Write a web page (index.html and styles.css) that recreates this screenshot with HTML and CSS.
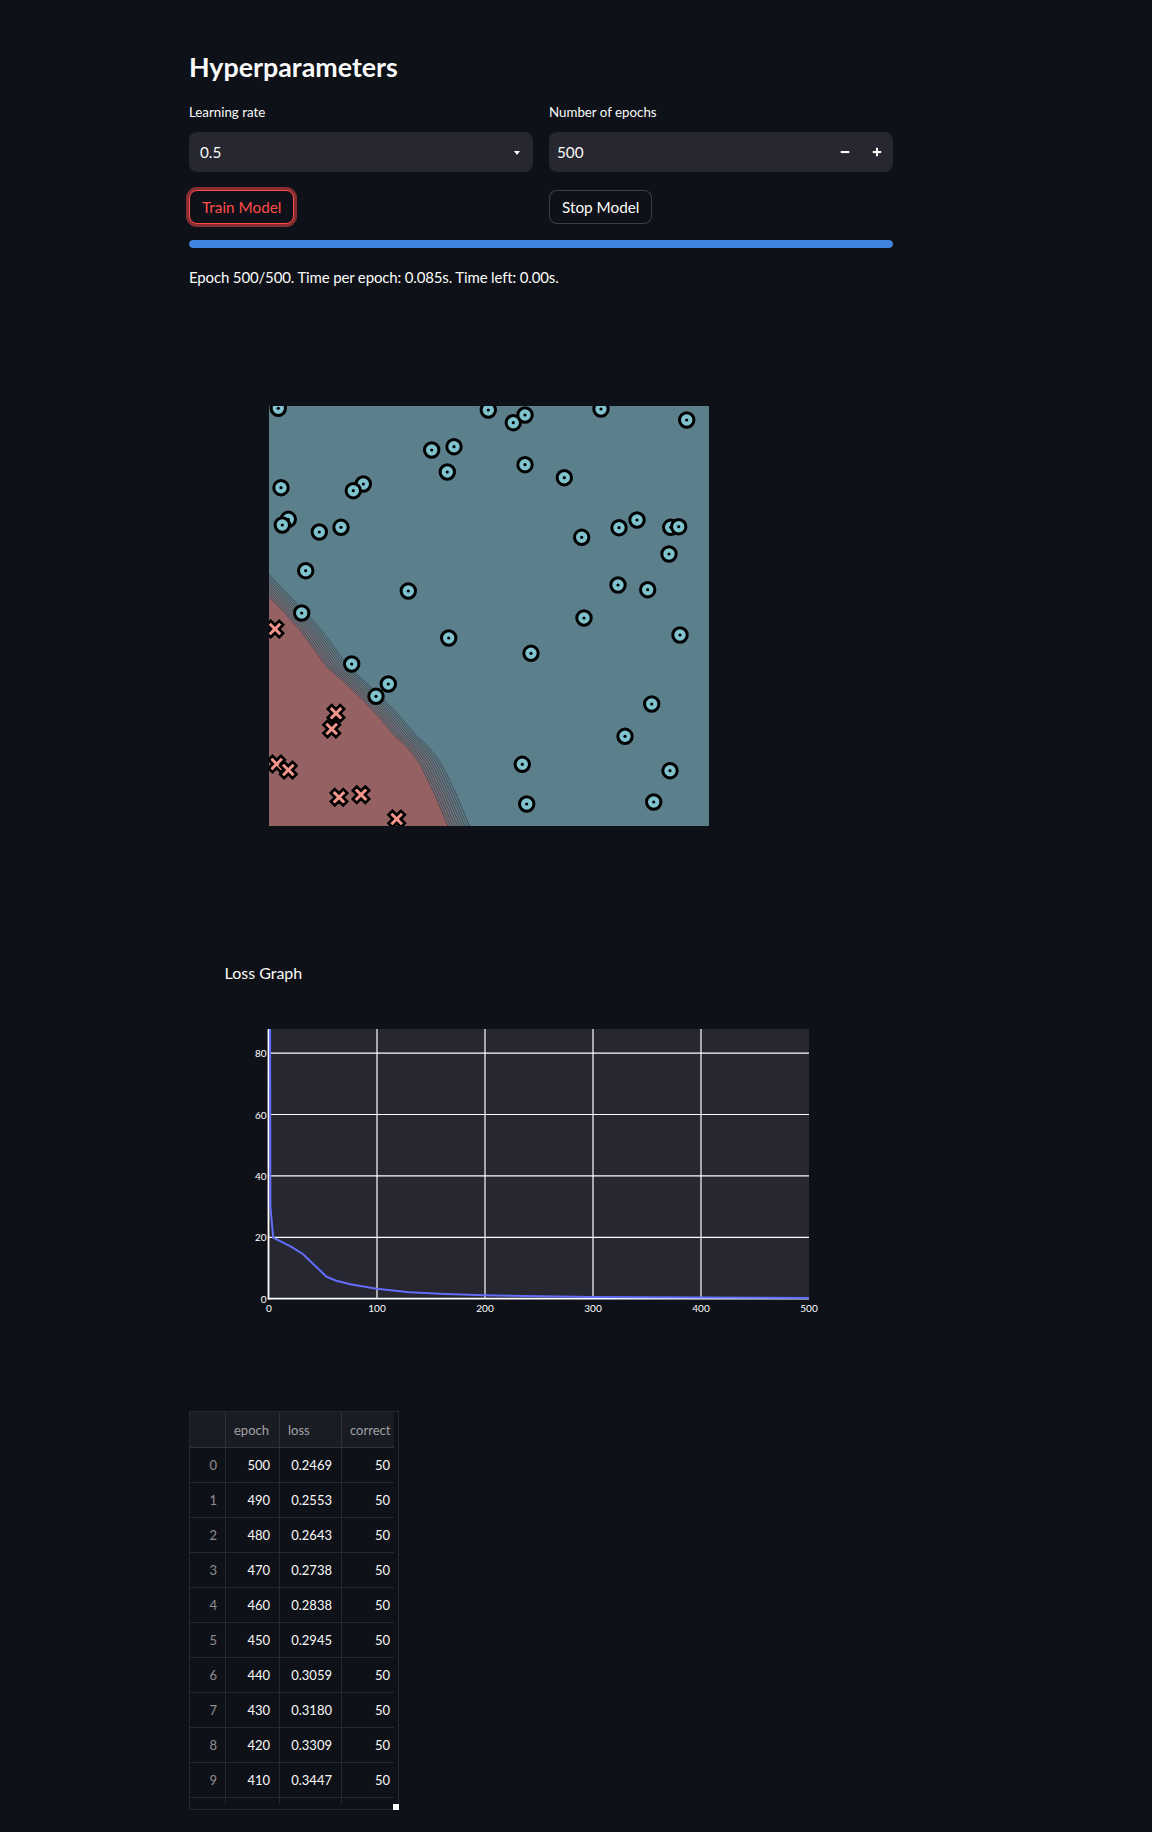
FILE: index.html
```html
<!DOCTYPE html>
<html lang="en">
<head>
<meta charset="utf-8">
<title>Hyperparameters</title>
<link rel="stylesheet" href="styles.css">
</head>
<body>
<div class="main">
  <h3 class="title">Hyperparameters</h3>

  <div class="cols">
    <div class="col">
      <label class="wlabel">Learning rate</label>
      <div class="select"><span class="val">0.5</span><span class="caret"></span></div>
    </div>
    <div class="col">
      <label class="wlabel">Number of epochs</label>
      <div class="numinput">
        <span class="numval">500</span>
        <span class="step"><svg width="10" height="10" viewBox="0 0 10 10"><rect x="0.7" y="4" width="8.6" height="2.1" fill="#fafafa"/></svg></span>
        <span class="step"><svg width="10" height="10" viewBox="0 0 10 10"><rect x="0.8" y="4" width="8.4" height="2.1" fill="#fafafa"/><rect x="3.95" y="0.8" width="2.1" height="8.4" fill="#fafafa"/></svg></span>
      </div>
    </div>
  </div>

  <div class="cols btnrow">
    <div class="col"><button class="btn btn-focus">Train Model</button></div>
    <div class="col"><button class="btn">Stop Model</button></div>
  </div>

  <div class="progress"><div class="progress-fill" style="width:100%"></div></div>

  <p class="status">Epoch 500/500. Time per epoch: 0.085s. Time left: 0.00s.</p>

  <div class="figure">
    <svg class="dplot" width="440" height="420" viewBox="0 0 440 420">
      <defs>
        <g id="m-o"><circle r="7.2" fill="#7fc3cf" stroke="#000" stroke-width="3"/><circle r="1.6" fill="#000"/></g>
        <path id="m-x" d="M-2.8,-8.8 L2.8,-8.8 L2.8,-2.8 L8.8,-2.8 L8.8,2.8 L2.8,2.8 L2.8,8.8 L-2.8,8.8 L-2.8,2.8 L-8.8,2.8 L-8.8,-2.8 L-2.8,-2.8 Z" transform="rotate(45)" fill="#f2958c" stroke="#000" stroke-width="2.6" stroke-linejoin="miter"/>
        <polygon id="redpoly" points="-30,160 0,191 14,205 31,224 44,242 58,261 75,276 91,291 110,311 124,328 139,342 151,358 166,389 179,420 190,445 -40,445 -40,160"/>
        <polyline id="edge" points="-30,160 0,191 14,205 31,224 44,242 58,261 75,276 91,291 110,311 124,328 139,342 151,358 166,389 179,420 190,445" fill="none"/>
      </defs>
      <rect width="440" height="420" fill="#5b7f8b"/>
      <g fill="#956163" fill-opacity="0.07">
        <use href="#redpoly" x="21.6"/>
        <use href="#redpoly" x="19.2"/>
        <use href="#redpoly" x="16.8"/>
        <use href="#redpoly" x="14.4"/>
        <use href="#redpoly" x="12"/>
        <use href="#redpoly" x="9.6"/>
        <use href="#redpoly" x="7.2"/>
        <use href="#redpoly" x="4.8"/>
        <use href="#redpoly" x="2.4"/>
      </g>
      <use href="#redpoly" fill="#956163"/>
      <g stroke="#343a44" stroke-opacity="0.8" stroke-width="0.8">
        <use href="#edge" x="0"/>
        <use href="#edge" x="2.4"/>
        <use href="#edge" x="4.8"/>
        <use href="#edge" x="7.2"/>
        <use href="#edge" x="9.6"/>
        <use href="#edge" x="12"/>
        <use href="#edge" x="14.4"/>
        <use href="#edge" x="16.8"/>
        <use href="#edge" x="19.2"/>
        <use href="#edge" x="21.6"/>
      </g>
      <g>
        <use href="#m-o" x="9.3" y="2.3"/>
        <use href="#m-o" x="219.3" y="4"/>
        <use href="#m-o" x="244.3" y="16.7"/>
        <use href="#m-o" x="256" y="9"/>
        <use href="#m-o" x="332" y="3"/>
        <use href="#m-o" x="417.7" y="14"/>
        <use href="#m-o" x="162.7" y="44"/>
        <use href="#m-o" x="185" y="40.7"/>
        <use href="#m-o" x="178.3" y="66"/>
        <use href="#m-o" x="256" y="58.7"/>
        <use href="#m-o" x="295.3" y="71.7"/>
        <use href="#m-o" x="12" y="81.7"/>
        <use href="#m-o" x="94.3" y="78"/>
        <use href="#m-o" x="84.3" y="84.7"/>
        <use href="#m-o" x="19.3" y="113.3"/>
        <use href="#m-o" x="13.3" y="119"/>
        <use href="#m-o" x="50.3" y="126"/>
        <use href="#m-o" x="72" y="121.3"/>
        <use href="#m-o" x="312.7" y="131.3"/>
        <use href="#m-o" x="350" y="121.7"/>
        <use href="#m-o" x="368" y="114"/>
        <use href="#m-o" x="401.7" y="121.3"/>
        <use href="#m-o" x="409.7" y="120.7"/>
        <use href="#m-o" x="400" y="148"/>
        <use href="#m-o" x="36.7" y="164.7"/>
        <use href="#m-o" x="139.3" y="185"/>
        <use href="#m-o" x="349" y="179"/>
        <use href="#m-o" x="378.7" y="183.7"/>
        <use href="#m-o" x="315" y="212"/>
        <use href="#m-o" x="32.7" y="207"/>
        <use href="#m-o" x="179.7" y="232"/>
        <use href="#m-o" x="411" y="229"/>
        <use href="#m-o" x="262" y="247.3"/>
        <use href="#m-o" x="82.7" y="258"/>
        <use href="#m-o" x="119.3" y="278"/>
        <use href="#m-o" x="107" y="290.3"/>
        <use href="#m-o" x="382.7" y="298"/>
        <use href="#m-o" x="356" y="330.3"/>
        <use href="#m-o" x="253.3" y="358.3"/>
        <use href="#m-o" x="401" y="364.7"/>
        <use href="#m-o" x="257.7" y="398"/>
        <use href="#m-o" x="384.7" y="396"/>
      </g>
      <g>
        <use href="#m-x" x="6" y="223"/>
        <use href="#m-x" x="67" y="307.3"/>
        <use href="#m-x" x="62.7" y="323"/>
        <use href="#m-x" x="7.7" y="358"/>
        <use href="#m-x" x="19.3" y="364"/>
        <use href="#m-x" x="70" y="391.3"/>
        <use href="#m-x" x="92" y="388.7"/>
        <use href="#m-x" x="127.7" y="413"/>
      </g>
    </svg>
  </div>

  <div class="chart">
    <svg class="lchart" width="704" height="380" viewBox="0 0 704 380">
      <defs>
        <clipPath id="plotclip"><rect x="80" y="89" width="540" height="271"/></clipPath>
      </defs>
      <text class="ctitle" x="35.5" y="39.3">Loss Graph</text>
      <rect x="80" y="89" width="540" height="269.7" fill="#262730"/>
      <g stroke="#ffffff" stroke-width="1.2">
        <line x1="188" y1="89" x2="188" y2="358.7"/>
        <line x1="296" y1="89" x2="296" y2="358.7"/>
        <line x1="404" y1="89" x2="404" y2="358.7"/>
        <line x1="512" y1="89" x2="512" y2="358.7"/>
        <line x1="80" y1="297.3" x2="620" y2="297.3"/>
        <line x1="80" y1="235.9" x2="620" y2="235.9"/>
        <line x1="80" y1="174.5" x2="620" y2="174.5"/>
        <line x1="80" y1="113.1" x2="620" y2="113.1"/>
      </g>
      <g stroke="#ffffff" stroke-width="1.8">
        <line x1="79.5" y1="89" x2="79.5" y2="359.5"/>
        <line x1="79" y1="358.7" x2="620" y2="358.7"/>
      </g>
      <polyline clip-path="url(#plotclip)" fill="none" stroke="#636efa" stroke-width="2" stroke-linejoin="round" points="81,80 81.4,266.7 84.2,297.7 102,306.7 113.8,314 137.5,336.7 147.4,340.7 161.3,344.3 187.4,348.7 220.6,352.3 256.2,354 295.3,355.3 403.3,357 620,358"/>
      <g class="ytick">
        <text x="77.5" y="113.1">80</text>
        <text x="77.5" y="174.5">60</text>
        <text x="77.5" y="235.9">40</text>
        <text x="77.5" y="297.3">20</text>
        <text x="77.5" y="358.7">0</text>
      </g>
      <g class="xtick">
        <text x="80" y="368">0</text>
        <text x="188" y="368">100</text>
        <text x="296" y="368">200</text>
        <text x="404" y="368">300</text>
        <text x="512" y="368">400</text>
        <text x="620" y="368">500</text>
      </g>
    </svg>
  </div>

  <div class="table">
    <div class="grid">
      <div class="th"></div><div class="th">epoch</div><div class="th">loss</div><div class="th last">correct</div>
      <div class="td idx">0</div><div class="td">500</div><div class="td">0.2469</div><div class="td last">50</div>
      <div class="td idx">1</div><div class="td">490</div><div class="td">0.2553</div><div class="td last">50</div>
      <div class="td idx">2</div><div class="td">480</div><div class="td">0.2643</div><div class="td last">50</div>
      <div class="td idx">3</div><div class="td">470</div><div class="td">0.2738</div><div class="td last">50</div>
      <div class="td idx">4</div><div class="td">460</div><div class="td">0.2838</div><div class="td last">50</div>
      <div class="td idx">5</div><div class="td">450</div><div class="td">0.2945</div><div class="td last">50</div>
      <div class="td idx">6</div><div class="td">440</div><div class="td">0.3059</div><div class="td last">50</div>
      <div class="td idx">7</div><div class="td">430</div><div class="td">0.3180</div><div class="td last">50</div>
      <div class="td idx">8</div><div class="td">420</div><div class="td">0.3309</div><div class="td last">50</div>
      <div class="td idx">9</div><div class="td">410</div><div class="td">0.3447</div><div class="td last">50</div>
      <div class="tp"></div><div class="tp"></div><div class="tp"></div><div class="tp last"></div>
    </div>
    <span class="resize"></span>
  </div>
</div>
</body>
</html>
```

FILE: styles.css
```css
html, body {
  margin: 0;
  padding: 0;
  background: #0e1117;
  color: #fafafa;
  font-family: "Lato", "Noto Sans", "Liberation Sans", sans-serif;
}

.main {
  width: 704px;
  margin-left: 189px;
  padding-top: 50px;
  padding-bottom: 22px;
}

.title {
  margin: 0;
  height: 34px;
  line-height: 34px;
  font-size: 26.8px;
  font-weight: 700;
}

.cols {
  display: flex;
  gap: 16px;
  margin-top: 18px;
}

.col {
  flex: 1;
  min-width: 0;
  display: flex;
  flex-direction: column;
  align-items: flex-start;
}

.wlabel {
  height: 20px;
  line-height: 20px;
  font-size: 13.3px;
  margin-bottom: 10px;
}

.select,
.numinput {
  align-self: stretch;
  height: 40px;
  background: #262730;
  border-radius: 8px;
  display: flex;
  align-items: center;
  font-size: 15.3px;
  box-sizing: border-box;
}

.select {
  padding: 0 13px 0 11px;
  justify-content: space-between;
}

.caret {
  width: 0;
  height: 0;
  border-left: 3.5px solid transparent;
  border-right: 3.5px solid transparent;
  border-top: 4px solid #fafafa;
  margin-top: 2px;
}

.numinput {
  padding-left: 8px;
}

.numval {
  flex: 1;
}

.step {
  width: 32px;
  height: 40px;
  display: flex;
  align-items: center;
  justify-content: center;
}

.btnrow {
  margin-top: 18px;
}

.btn {
  height: 34px;
  padding: 0 12px;
  border: 1px solid rgba(250, 250, 250, 0.2);
  border-radius: 8px;
  background: #0e1117;
  color: #fafafa;
  font-family: inherit;
  font-size: 15.3px;
  line-height: 32px;
}

.btn-focus {
  border-color: #ff4b4b;
  color: #ff4b4b;
  box-shadow: 0 0 0 3px rgba(255, 75, 75, 0.5);
}

.progress {
  margin-top: 16px;
  height: 8px;
  border-radius: 4px;
  background: #262730;
  overflow: hidden;
}

.progress-fill {
  height: 100%;
  background: #3f84de;
  border-radius: 4px;
}

.status {
  margin: 17px 0 0;
  height: 24px;
  line-height: 24px;
  font-size: 15px;
  letter-spacing: -0.15px;
}

.figure {
  margin-top: 117px;
  padding-left: 80px;
  height: 420px;
}

.dplot {
  display: block;
}

.chart {
  margin-top: 114px;
  height: 380px;
}

.lchart {
  display: block;
}

.ctitle {
  font-family: "Lato", "Noto Sans", sans-serif;
  font-size: 16px;
  fill: #fafafa;
}

.ytick text,
.xtick text {
  font-family: "Lato", "Noto Sans", sans-serif;
  font-size: 10px;
  fill: #ffffff;
  dominant-baseline: central;
}

.ytick text {
  text-anchor: end;
}

.xtick text {
  text-anchor: middle;
}

.table {
  position: relative;
  margin-top: 91px;
  width: 208px;
  height: 397px;
  border: 1px solid rgba(250, 250, 250, 0.1);
}

.grid {
  display: grid;
  grid-template-columns: 36px 54px 62px 52px;
  grid-template-rows: 36px repeat(10, 35px) 6px;
  font-size: 13px;
}

.th,
.td,
.tp {
  box-sizing: border-box;
  border-right: 1px solid rgba(250, 250, 250, 0.1);
  display: flex;
  align-items: center;
  white-space: nowrap;
  overflow: hidden;
}

.th,
.td {
  border-bottom: 1px solid rgba(250, 250, 250, 0.1);
}

.th {
  background: #1a1c24;
  color: rgba(250, 250, 250, 0.6);
  padding-left: 8px;
  padding-top: 1px;
}

.td {
  justify-content: flex-end;
  padding-right: 9px;
  color: #fafafa;
}

.td.idx {
  color: rgba(250, 250, 250, 0.55);
  padding-right: 8px;
}

.td.last {
  padding-right: 4px;
}

.last {
  border-right: none;
}

.resize {
  position: absolute;
  right: -1px;
  bottom: -1px;
  width: 6px;
  height: 6px;
  background: #ffffff;
}
```
